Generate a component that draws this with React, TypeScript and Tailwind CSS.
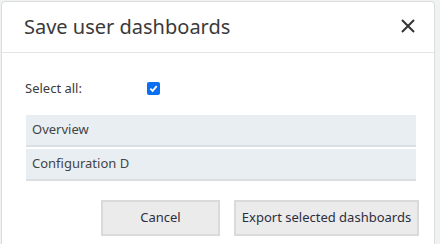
import React from "react";

export default function App() {
  const rows = ["Overview", "Configuration D"];
  return (
    <div className="w-[440px] h-[244px] bg-[#eef2f2] overflow-hidden" style={{ fontFamily: '"Noto Sans", "Open Sans", sans-serif' }}>
      <div className="ml-px mt-px w-[434px] h-[260px] bg-white border border-[#dcdcdc] rounded-tl-[4px] rounded-tr-[4px] flex flex-col">
        <div className="h-[51px] flex items-center justify-between pl-[22px] pr-[18px] border-b border-[#e3e3e3]">
          <span className="text-[20px] text-[#3a3a3a] leading-none">Save user dashboards</span>
          <svg width="16" height="16" viewBox="0 0 16 16" className="mb-[2px]">
            <path d="M2 2 L14 14 M14 2 L2 14" stroke="#333" strokeWidth="2" strokeLinecap="butt" />
          </svg>
        </div>
        <div className="pl-[23px] pr-[18px] pt-[28px] flex flex-col">
          <div className="flex items-center h-[15px]">
            <span className="w-[122px] text-[13px] text-[#3c3c3c]">Select all:</span>
            <span className="w-[13px] h-[13px] rounded-[2px] bg-[#0b6ff2] flex items-center justify-center">
              <svg width="9" height="9" viewBox="0 0 10 10">
                <path d="M1.5 5.2 L4 7.6 L8.6 2.4" fill="none" stroke="white" strokeWidth="2" />
              </svg>
            </span>
          </div>
          <div className="mt-[19px] ml-px w-[390px] flex flex-col gap-[2px]">
            {rows.map((r) => (
              <div key={r} className="h-[32px] bg-[#e9eef3] border-b-[2px] border-[#dcdfe2] flex items-center pl-[6px] text-[13px] text-[#444]">
                {r}
              </div>
            ))}
          </div>
          <div className="mt-[19px] flex justify-end gap-[14px] mr-[-3px]">
            <button className="shrink-0 w-[119px] h-[36px] bg-[#ebebeb] border-[2px] border-[#dadada] text-[13px] text-[#2e2e3e]">Cancel</button>
            <button className="shrink-0 w-[185px] h-[36px] bg-[#ebebeb] border-[2px] border-[#dadada] text-[13px] text-[#2e2e3e]">Export selected dashboards</button>
          </div>
        </div>
      </div>
    </div>
  );
}
